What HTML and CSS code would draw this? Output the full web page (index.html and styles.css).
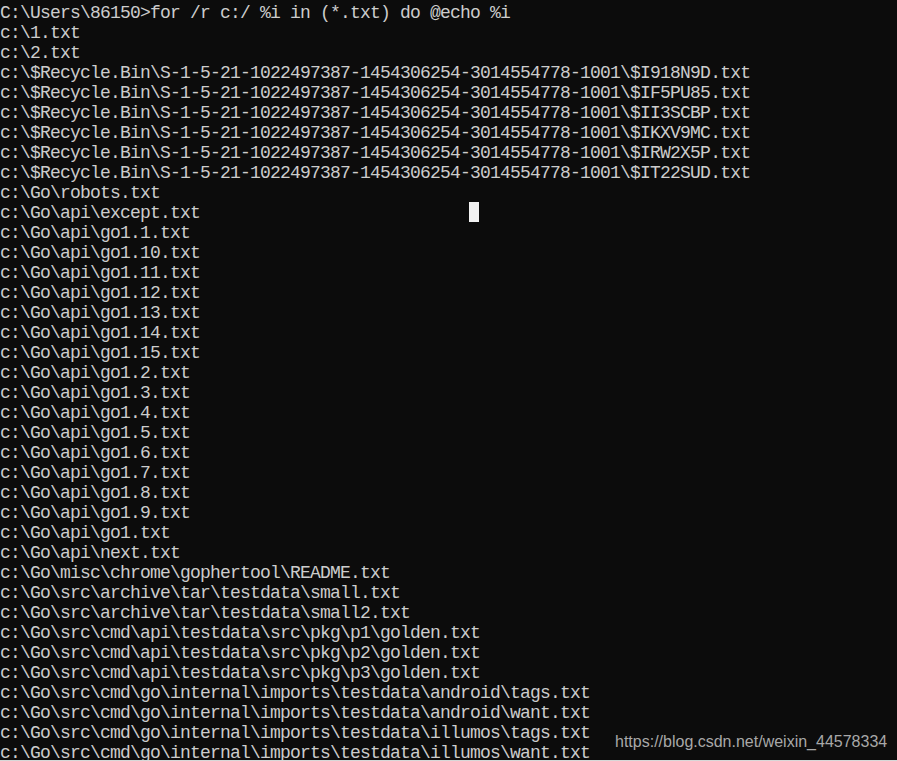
FILE: index.html
```html
<!DOCTYPE html>
<html>
<head>
<meta charset="utf-8">
<link rel="stylesheet" href="styles.css">
</head>
<body>
<div class="console">
<pre class="output">C:\Users\86150&gt;for /r c:/ %i in (*.txt) do @echo %i
c:\1.txt
c:\2.txt
c:\$Recycle.Bin\S-1-5-21-1022497387-1454306254-3014554778-1001\$I918N9D.txt
c:\$Recycle.Bin\S-1-5-21-1022497387-1454306254-3014554778-1001\$IF5PU85.txt
c:\$Recycle.Bin\S-1-5-21-1022497387-1454306254-3014554778-1001\$II3SCBP.txt
c:\$Recycle.Bin\S-1-5-21-1022497387-1454306254-3014554778-1001\$IKXV9MC.txt
c:\$Recycle.Bin\S-1-5-21-1022497387-1454306254-3014554778-1001\$IRW2X5P.txt
c:\$Recycle.Bin\S-1-5-21-1022497387-1454306254-3014554778-1001\$IT22SUD.txt
c:\Go\robots.txt
c:\Go\api\except.txt
c:\Go\api\go1.1.txt
c:\Go\api\go1.10.txt
c:\Go\api\go1.11.txt
c:\Go\api\go1.12.txt
c:\Go\api\go1.13.txt
c:\Go\api\go1.14.txt
c:\Go\api\go1.15.txt
c:\Go\api\go1.2.txt
c:\Go\api\go1.3.txt
c:\Go\api\go1.4.txt
c:\Go\api\go1.5.txt
c:\Go\api\go1.6.txt
c:\Go\api\go1.7.txt
c:\Go\api\go1.8.txt
c:\Go\api\go1.9.txt
c:\Go\api\go1.txt
c:\Go\api\next.txt
c:\Go\misc\chrome\gophertool\README.txt
c:\Go\src\archive\tar\testdata\small.txt
c:\Go\src\archive\tar\testdata\small2.txt
c:\Go\src\cmd\api\testdata\src\pkg\p1\golden.txt
c:\Go\src\cmd\api\testdata\src\pkg\p2\golden.txt
c:\Go\src\cmd\api\testdata\src\pkg\p3\golden.txt
c:\Go\src\cmd\go\internal\imports\testdata\android\tags.txt
c:\Go\src\cmd\go\internal\imports\testdata\android\want.txt
c:\Go\src\cmd\go\internal\imports\testdata\illumos\tags.txt
c:\Go\src\cmd\go\internal\imports\testdata\illumos\want.txt</pre>
<div class="cursor"></div>
<div class="watermark">https://blog.csdn.net/weixin_44578334</div>
</div>
</body>
</html>
```
FILE: styles.css
```css
html, body {
  margin: 0;
  padding: 0;
  background: #0c0c0c;
}
.console {
  position: relative;
  width: 897px;
  height: 760px;
  overflow: hidden;
  background: #0c0c0c;
  border-bottom: 1px solid #d8d8d8;
}
.output {
  margin: 0;
  padding: 3px 0 0 0;
  color: #cccccc;
  font-family: "Liberation Mono", monospace;
  font-size: 18px;
  letter-spacing: -0.8px;
  line-height: 20px;
  white-space: pre;
}
.cursor {
  position: absolute;
  left: 469px;
  top: 202px;
  width: 10px;
  height: 20px;
  background: #f2f2f2;
}
.watermark {
  position: absolute;
  left: 615px;
  top: 732px;
  color: #a8a8a8;
  font-family: "Liberation Sans", Arial, sans-serif;
  font-size: 16px;
  line-height: 20px;
}
```
